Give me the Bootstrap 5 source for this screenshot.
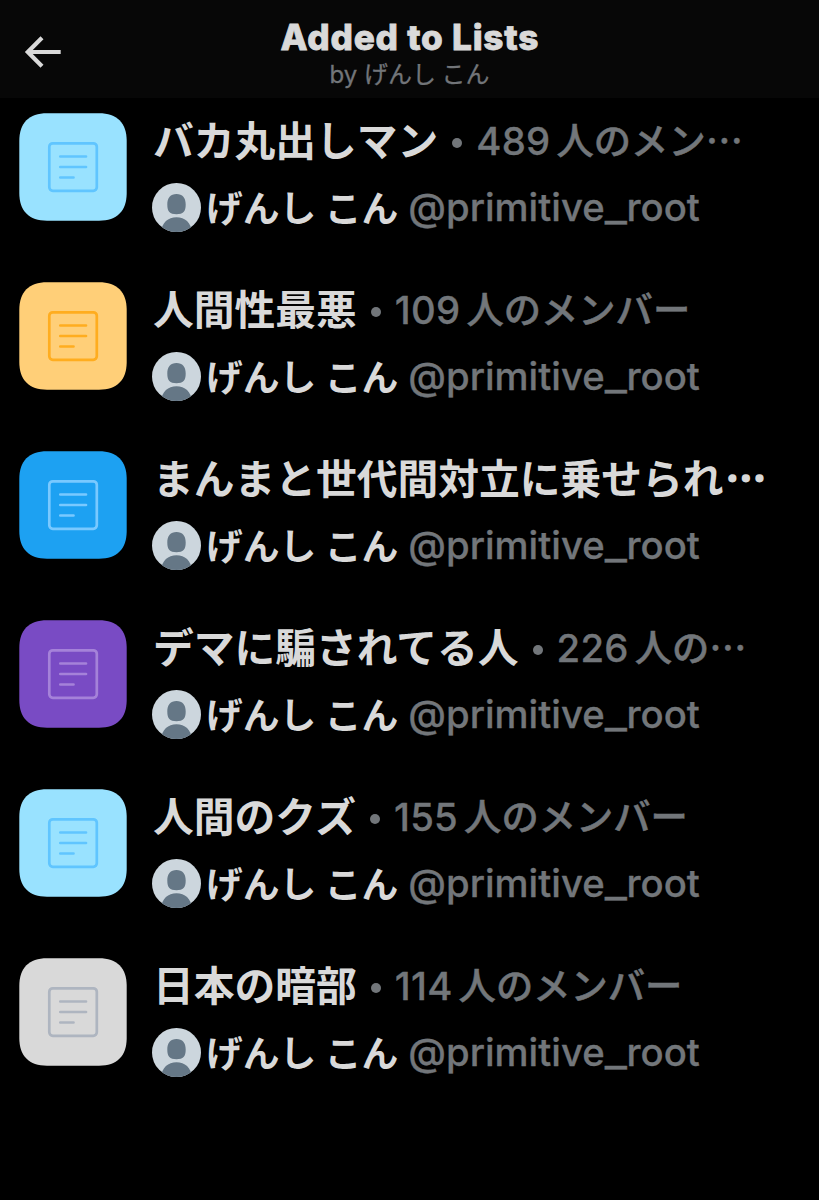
<!DOCTYPE html>
<html lang="ja">
<head>
<meta charset="utf-8">
<meta name="viewport" content="width=device-width, initial-scale=1">
<title>Added to Lists</title>
<link rel="stylesheet" href="https://cdn.jsdelivr.net/npm/bootstrap@5.3.0/dist/css/bootstrap.min.css">
<style>
body{background:#000;color:#d9d9d9;font-family:Inter,"Noto Sans CJK JP",sans-serif;min-height:1200px;overflow:hidden}
.topbar{height:98px;background:#070707;padding:0 24px}
.back{width:38px;margin-top:5px}
.heading{font-size:35.2px;font-weight:800;line-height:40px;padding-top:17px;margin:0;white-space:nowrap;letter-spacing:.75px;margin-right:-.75px;-webkit-text-stroke:.8px currentColor}
.byline{font-size:24px;line-height:34px;margin-top:-1px;color:#727579;white-space:nowrap;-webkit-text-stroke:.3px currentColor}
.jp{font-family:"Noto Sans CJK JP",sans-serif}
.entry{height:169px;padding:15px 0 0 19px}
.tile{width:108px;height:108px;margin-right:26px}
.title-row,.owner{white-space:nowrap;color:#72767a}
.title-row{height:60px;line-height:58px;margin-top:-4px}
.list-name{font-size:40.75px;font-weight:700;color:#d9d9d9}
.more{-webkit-text-stroke:1.6px currentColor;margin-left:2px}
.dot{width:10px;height:10px;border-radius:50%;background:#72767a;margin:7px 14px 0 14px}
.num{font-size:38.3px;font-weight:500;padding-top:3px;letter-spacing:.3px;-webkit-text-stroke:.3px currentColor}
.members{font-size:37.3px;font-weight:500;margin-left:6px;-webkit-text-stroke:.5px currentColor}
.owner{height:50px;line-height:50px;margin:13px 0 0 -1px}
.avatar{width:49px;height:49px;border-radius:50%}
.owner-name{font-size:36.8px;font-weight:700;color:#d9d9d9;margin:-3px 0 0 5px}
.handle{font-size:38.3px;font-weight:500;margin:0 0 0 10px;-webkit-text-stroke:.3px currentColor}
.under{display:inline-block;transform:scaleX(1.25);margin:0 2px}
.blue-light{color:#60c5ff}.orange{color:#ffad1f}.blue{color:#79c9ff}.violet{color:#a582d9}.gray{color:#aeb5c0}
</style>
</head>
<body>
<svg class="d-none" xmlns="http://www.w3.org/2000/svg">
<symbol id="doc" viewBox="0 0 108 108"><g fill="none" stroke="currentColor" stroke-width="2.7" stroke-linecap="round"><rect x="30.3" y="30.3" width="47.5" height="47.5" rx="3.5"/><path d="M41.3 43.5H67M41.3 54H67M41.3 64.500H54.500"/></g></symbol>
<symbol id="person" viewBox="0 0 49 49"><path fill="#ccd6dd" d="M0 0h49v49H0z"/><path fill="#657786" d="M24.5 11c6 0 9.200 4 9.200 10.500c0 7-2.500 9.700-9.200 9.700s-9.200-2.700-9.200-9.700C15.300 15 18.500 11 24.500 11zM9 49c1-9.500 7-14.700 15.500-14.700S39 39.500 40 49z"/></symbol>
<symbol id="squircle" viewBox="0 0 108 108"><path fill="currentColor" d="M28 .3H80C98 .3 107.700 10 107.700 28V80C107.700 98 98 107.700 80 107.700H28C10 107.700 .3 98 .3 80V28C.3 10 10 .3 28 .3Z"/></symbol>
</svg>
<header class="topbar d-flex align-items-center justify-content-between">
<svg class="back" height="34" viewBox="0 0 38 34" fill="none" stroke="#d9d9d9" stroke-width="4.2"><path d="M36.700 17H4M18 2.800L3.800 17L18 31.200"/></svg>
<div class="text-center align-self-start"><h1 class="heading">Added to Lists</h1><div class="byline">by <span class="jp">げんし こん</span></div></div>
<div class="back"></div>
</header>
<main id="lists"></main>
<script>
const lists = [
  ["バカ丸出しマン","489","人のメン…","#99e2ff","blue-light"],
  ["人間性最悪","109","人のメンバー","#ffcf78","orange"],
  ["まんまと世代間対立に乗せられ<span class='more'>…</span>","","","#1da1f2","blue"],
  ["デマに騙されてる人","226","人の…","#794bc4","violet"],
  ["人間のクズ","155","人のメンバー","#99e2ff","blue-light"],
  ["日本の暗部","114","人のメンバー","#d9d9d9","gray"]
];
document.getElementById("lists").innerHTML = lists.map(([name,num,members,bg,ink]) => `
<article class="entry d-flex">
  <svg class="tile flex-shrink-0 ${ink}"><use href="#squircle" style="color:${bg}"/><use href="#doc"/></svg>
  <div>
    <div class="title-row d-flex align-items-center"><span class="list-name jp">${name}</span>${num ? `<span class="dot"></span><span class="num">${num}</span><span class="members jp">${members}</span>` : ""}</div>
    <div class="owner d-flex align-items-center"><svg class="avatar"><use href="#person"/></svg><span class="owner-name jp">げんし こん</span><span class="handle">@primitive<span class="under">_</span>root</span></div>
  </div>
</article>`).join("");
</script>
<script src="https://cdn.jsdelivr.net/npm/bootstrap@5.3.0/dist/js/bootstrap.bundle.min.js"></script>
</body>
</html>
